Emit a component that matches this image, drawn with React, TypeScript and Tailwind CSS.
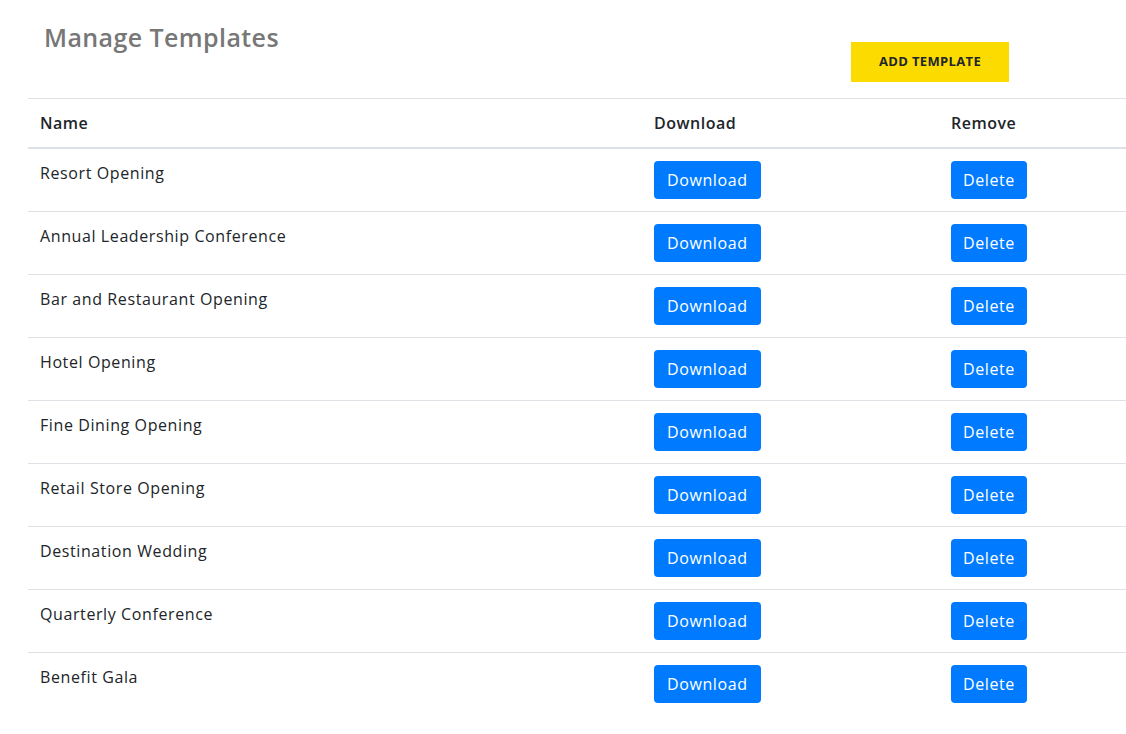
const templates = [
  'Resort Opening',
  'Annual Leadership Conference',
  'Bar and Restaurant Opening',
  'Hotel Opening',
  'Fine Dining Opening',
  'Retail Store Opening',
  'Destination Wedding',
  'Quarterly Conference',
  'Benefit Gala',
]

export default function App() {
  return (
    <div className="min-h-screen bg-white text-[#212529] font-['Open_Sans',sans-serif]">
      {/* Header */}
      <div className="flex items-start h-[98px]">
        <h1 className="flex-1 pl-[44px] pt-[22px] text-[25px] leading-[30px] font-semibold text-[#777777] tracking-[0.4px]">
          Manage Templates
        </h1>
        <button className="mt-[42px] mr-[117px] w-[158px] h-[40px] bg-[#fcdc00] text-[13px] font-bold uppercase text-[#212529] tracking-[0.35px]">
          Add Template
        </button>
      </div>

      {/* Table */}
      <div className="ml-[28px]">
        <table className="w-full border-collapse text-[16px] tracking-[0.6px]">
          <thead>
            <tr className="border-t border-[#dee2e6] border-b-2">
              <th className="w-[614px] px-3 py-3 text-left font-semibold leading-6 tracking-[0.5px]">Name</th>
              <th className="w-[297px] px-3 py-3 text-left font-semibold leading-6 tracking-[0.5px]">Download</th>
              <th className="px-3 py-3 text-left font-semibold leading-6 tracking-[0.5px]">Remove</th>
            </tr>
          </thead>
          <tbody>
            {templates.map((name, i) => (
              <tr key={name} className={i === 0 ? '' : 'border-t border-[#dee2e6]'}>
                <td className="px-3 pt-3 pb-3 align-top leading-6">{name}</td>
                <td className="px-3 pt-3 pb-3 align-top">
                  <button className="h-[38px] px-[13px] rounded bg-[#007bff] text-white leading-6">Download</button>
                </td>
                <td className="px-3 pt-3 pb-3 align-top">
                  <button className="h-[38px] px-[12px] rounded bg-[#007bff] text-white leading-6">Delete</button>
                </td>
              </tr>
            ))}
          </tbody>
        </table>
      </div>
    </div>
  )
}
